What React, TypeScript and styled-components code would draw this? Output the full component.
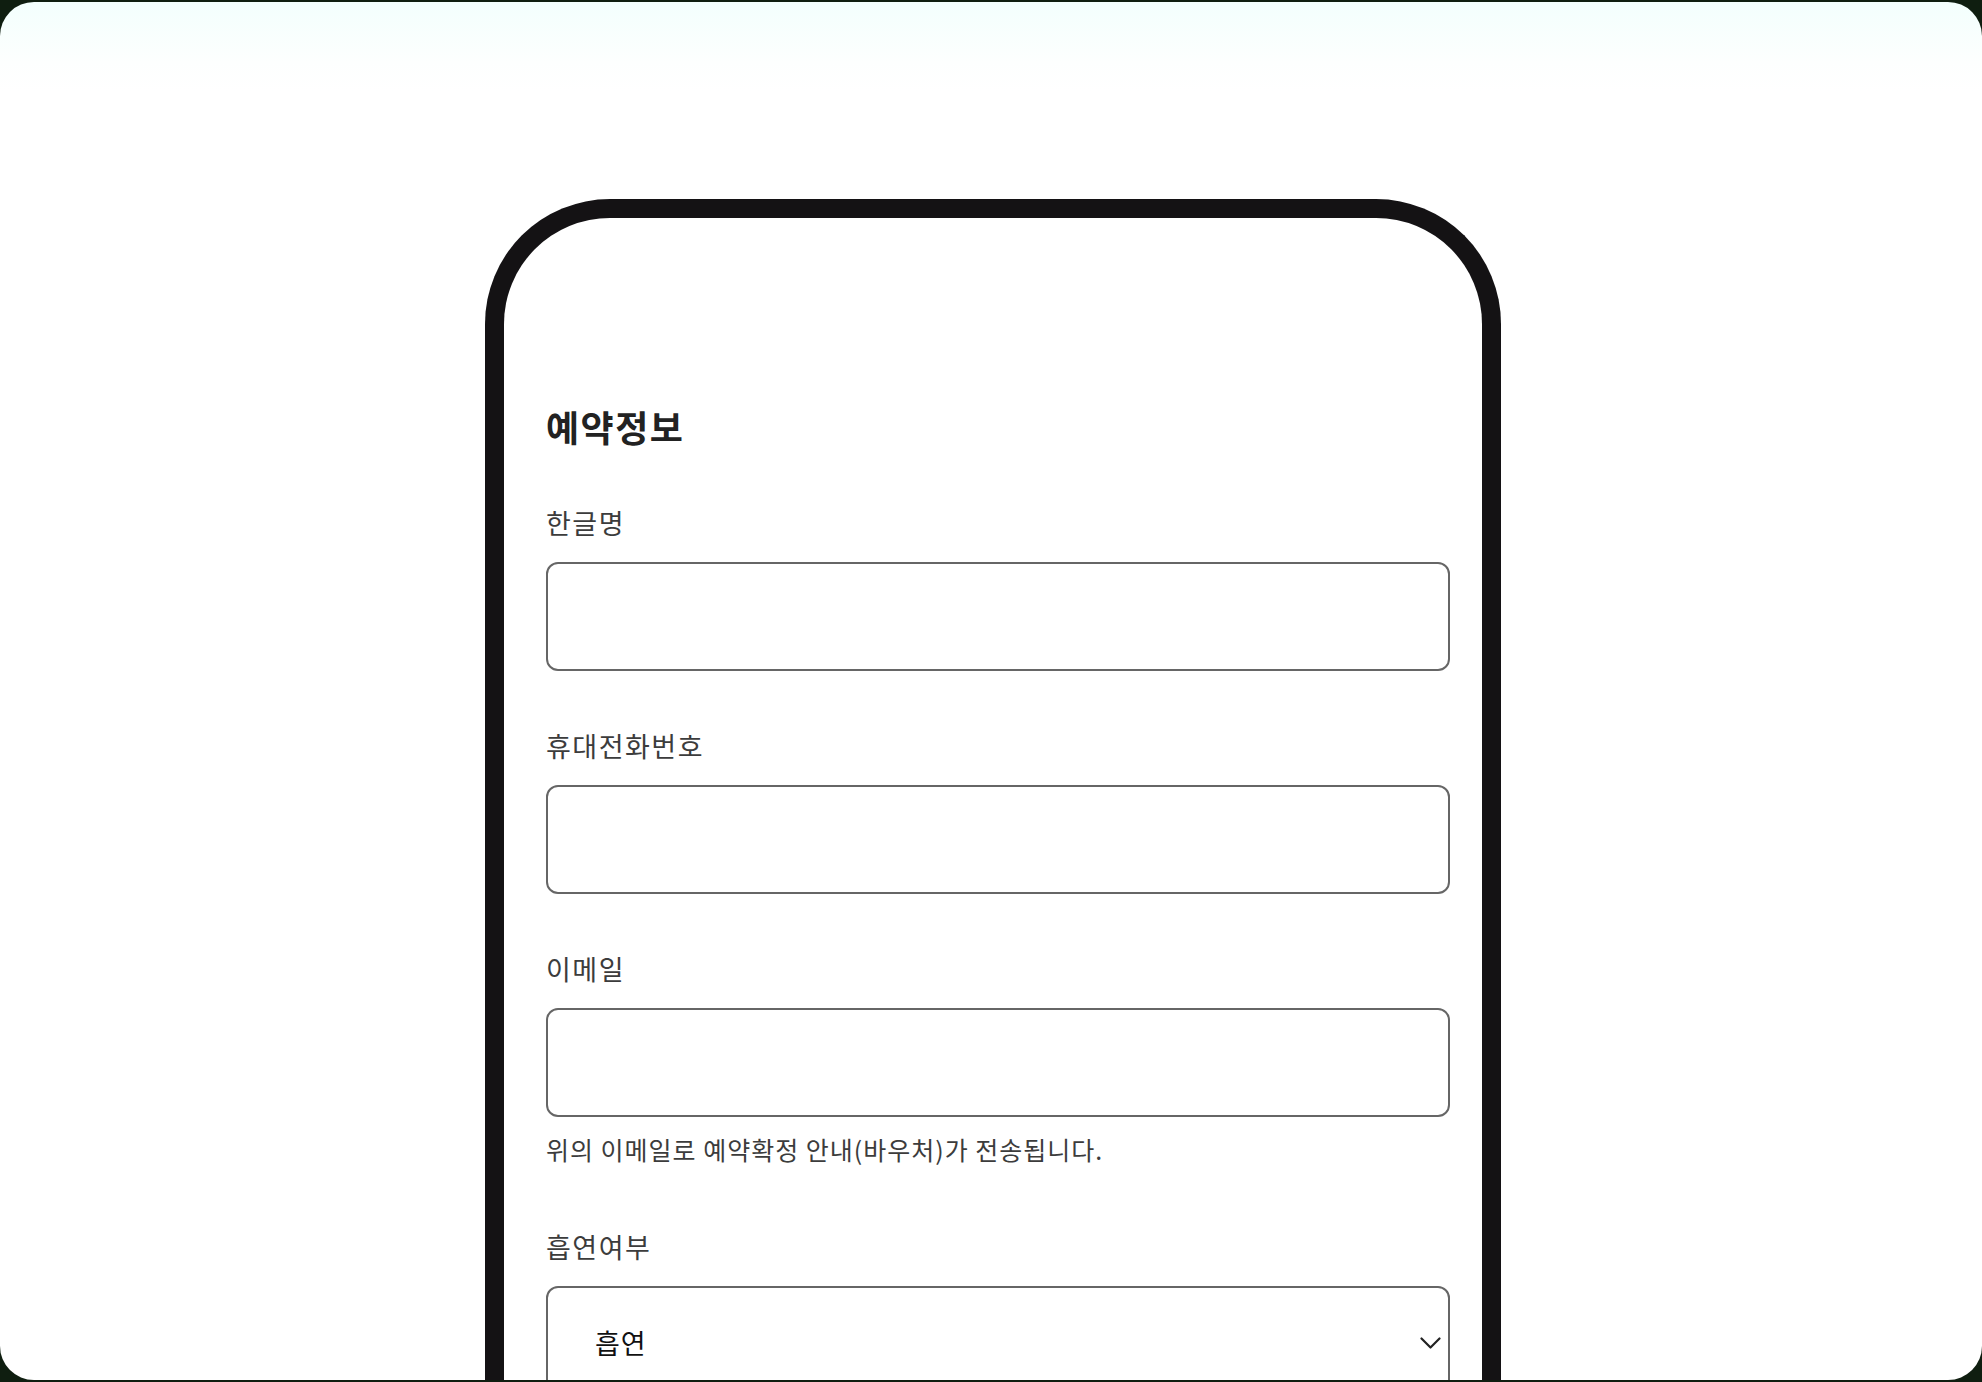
import styled, { createGlobalStyle } from "styled-components";

const GlobalStyle = createGlobalStyle`
    html, body{
        margin:0;
        padding:0;
        background-color:#0f1e10;
    }
    *{
        box-sizing:border-box;
    }
`;

const Screen = styled.div`
    height:1382px;
    padding:2px 0;
    overflow:hidden;
    font-family:"Noto Sans CJK KR", "Noto Sans", sans-serif;
`;

const Card = styled.div`
    height:100%;
    display:flex;
    justify-content:center;
    padding-top:197px;
    padding-left:4px;
    overflow:hidden;

    border-radius:34px;
    background:linear-gradient(#f3fffd 0, #fdfffe 60px, #ffffff 90px);
`;

const Phone = styled.div`
    width:1016px;
    height:1400px;
    flex-shrink:0;

    display:flex;
    flex-direction:column;

    padding:186px 32px 0 42px;

    border:19px solid #141214;
    border-bottom:none;
    border-radius:125px 125px 0 0;
    background-color:#fff;
`;

const Title = styled.h2`
    margin:0 0 58px;
    font-size:36px;
    line-height:44px;
    letter-spacing:1.5px;
    font-weight:700;
    color:#222;
`;

const Field = styled.div<{ $gap?: number }>`
    display:flex;
    flex-direction:column;
    margin-bottom:${p => p.$gap ?? 58}px;
`;

const Label = styled.label`
    font-size:27px;
    line-height:34px;
    letter-spacing:1.5px;
    color:#3c3c3c;
    margin-bottom:22px;
`;

const Input = styled.input`
    width:100%;
    height:109px;
    padding:0 46px;

    font-family:inherit;
    font-size:27px;

    border:2px solid #666;
    border-radius:12px;
    background-color:#fff;
    outline:none;
`;

const Help = styled.p`
    margin:16px 0 0;
    font-size:25px;
    line-height:32px;
    letter-spacing:1px;
    color:#3c3c3c;
`;

const SelectBox = styled.div`
    height:109px;
    display:flex;
    align-items:center;
    justify-content:space-between;
    padding:4px 7px 0 47px;

    border:2px solid #666;
    border-radius:12px;

    font-size:27px;
    letter-spacing:1px;
    color:#111;
`;

const Chevron = () => (
    <svg width="21" height="12" viewBox="0 0 21 12" fill="none">
        <polyline points="1.5,1.5 10.5,10.5 19.5,1.5" stroke="#222" strokeWidth="2.2" strokeLinecap="round" strokeLinejoin="round" />
    </svg>
);

const App = () => {
    const fields = [
        { label:"한글명", name:"nameKo" },
        { label:"휴대전화번호", name:"phone" },
    ];

    return(
        <Screen>
            <GlobalStyle />
            <Card>
                <Phone>
                    <Title>예약정보</Title>
                    {
                        fields.map(item => (
                            <Field key={item.name}>
                                <Label htmlFor={item.name}>{item.label}</Label>
                                <Input id={item.name} />
                            </Field>
                        ))
                    }
                    <Field $gap={65}>
                        <Label htmlFor="email">이메일</Label>
                        <Input id="email" type="email" />
                        <Help>위의 이메일로 예약확정 안내(바우처)가 전송됩니다.</Help>
                    </Field>
                    <Field>
                        <Label>흡연여부</Label>
                        <SelectBox>
                            <span>흡연</span>
                            <Chevron />
                        </SelectBox>
                    </Field>
                </Phone>
            </Card>
        </Screen>
    )
}

export default App;
